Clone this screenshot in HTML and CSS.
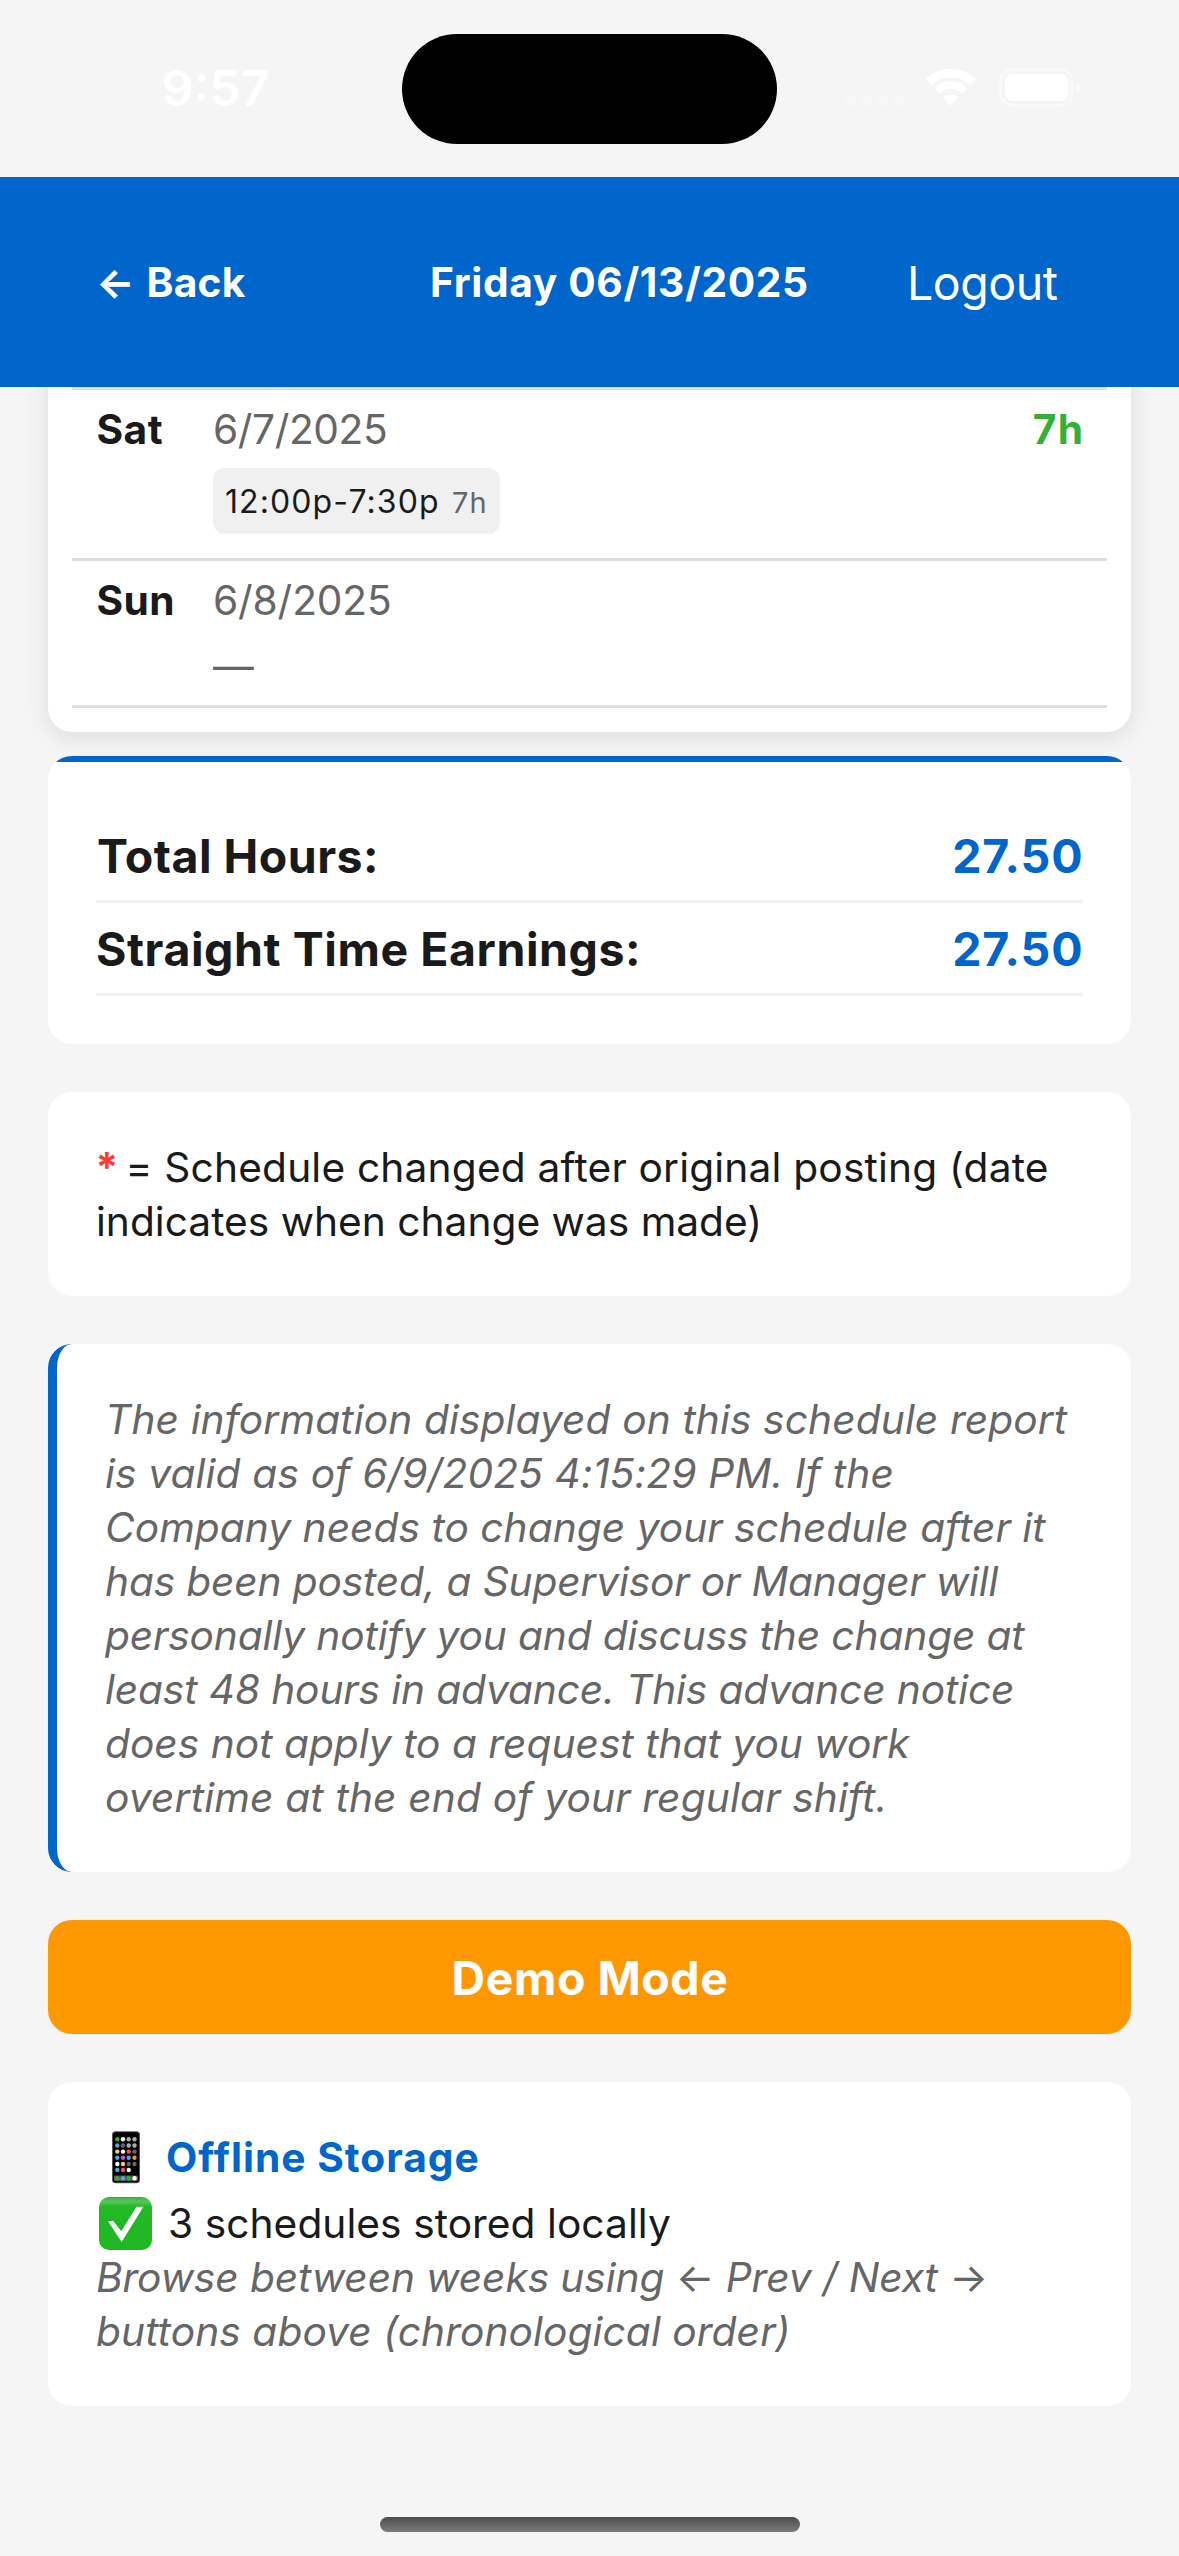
FILE: index.html
```
<!DOCTYPE html>
<html lang="en">
<head>
<meta charset="utf-8">
<title>Schedule</title>
<link rel="stylesheet" href="styles.css">
</head>
<body>
<div class="screen">
  <div class="status-bar">
    <span class="clock">9:57</span>
    <div class="island"></div>
    <svg class="cellular" width="60" height="12" viewBox="0 0 60 12"><circle cx="6" cy="6" r="5"/><circle cx="22" cy="6" r="5"/><circle cx="38" cy="6" r="5"/><circle cx="54" cy="6" r="5"/></svg>
    <svg class="wifi" width="50" height="37" viewBox="0 0 50 37">
      <clipPath id="wedge"><path d="M24.7 36.8L-14.8 -5.9H64.2Z"/></clipPath>
      <g clip-path="url(#wedge)" fill="none" stroke="#fff">
        <circle cx="24.7" cy="36.7" r="32.4" stroke-width="8.4"/>
        <circle cx="24.7" cy="36.7" r="20.6" stroke-width="7.6"/>
        <circle cx="24.7" cy="36.7" r="11" fill="#fff" stroke="none"/>
      </g>
    </svg>
    <svg class="battery" width="82" height="40" viewBox="0 0 82 40">
      <rect x="1.5" y="1.5" width="72" height="36" rx="12" fill="none" stroke="#fff" stroke-opacity=".4" stroke-width="3"/>
      <rect x="6" y="6" width="63" height="27" rx="8" fill="#fff"/>
      <path d="M77.5 14.5c5 2 5 8 0 10z" fill="#fff" fill-opacity=".5"/>
    </svg>
  </div>

  <header class="header">
    <a class="back"><span class="back-arrow">←</span>Back</a>
    <h1 class="title">Friday 06/13/2025</h1>
    <a class="logout">Logout</a>
  </header>

  <main class="content">
    <section class="card days">
      <div class="day">
        <span class="day-name">Sat</span>
        <div class="day-body">
          <span class="date">6/7/2025</span>
          <div class="shift"><span class="shift-time">12:00p-7:30p</span><span class="shift-hours">7h</span></div>
        </div>
        <span class="day-total">7h</span>
      </div>
      <div class="day day-off">
        <span class="day-name">Sun</span>
        <div class="day-body">
          <span class="date date-wide">6/8/2025</span>
          <span class="none">—</span>
        </div>
      </div>
    </section>

    <section class="card totals">
      <div class="total"><span class="total-hours">Total Hours:</span><span class="value">27.50</span></div>
      <div class="total"><span>Straight Time Earnings:</span><span class="value">27.50</span></div>
    </section>

    <section class="card legend">
      <p class="line"><b class="star">*</b><span class="legend-text">= Schedule changed after original posting (date</span></p>
      <p class="line">indicates when change was made)</p>
    </section>

    <section class="card notice">
      <span class="line">The information displayed on this schedule report</span>
      <span class="line">is valid as of 6/9/2025 4:15:29 PM. If the</span>
      <span class="line">Company needs to change your schedule after it</span>
      <span class="line">has been posted, a Supervisor or Manager will</span>
      <span class="line">personally notify you and discuss the change at</span>
      <span class="line">least 48 hours in advance. This advance notice</span>
      <span class="line">does not apply to a request that you work</span>
      <span class="line">overtime at the end of your regular shift.</span>
    </section>

    <button class="demo">Demo Mode</button>

    <section class="card storage">
      <h2 class="storage-title">
        <svg class="emoji" width="70" height="54" viewBox="0 0 70 54">
          <rect x="16" y="1.3" width="28" height="52" rx="3.5" fill="#555"/>
          <rect x="17" y="2.3" width="26" height="50" rx="2.6" fill="#000"/>
          <rect x="18" y="45.5" width="24" height="5.6" rx="1" fill="#555"/>
          <g fill="#fff"><circle cx="27" cy="9.3" r="2.2"/><circle cx="27" cy="21.6" r="2.2"/><circle cx="21.3" cy="34" r="2.2"/><circle cx="32.7" cy="40" r="2.2"/><circle cx="38.5" cy="48.3" r="2.2"/></g>
          <g fill="#aaa"><circle cx="32.7" cy="9.3" r="2.2"/><circle cx="38.5" cy="9.3" r="2.2"/><circle cx="32.7" cy="15.5" r="2.2"/><circle cx="38.5" cy="15.5" r="2.2"/></g>
          <g fill="#666"><circle cx="27" cy="15.5" r="2.2"/><circle cx="38.5" cy="21.6" r="2.2"/><circle cx="32.7" cy="34" r="2.2"/><circle cx="38.5" cy="34" r="2.2"/></g>
          <g fill="#5aa0e6"><circle cx="21.3" cy="15.5" r="2.2"/><circle cx="21.3" cy="27.7" r="2.2"/><circle cx="32.7" cy="27.7" r="2.2"/><circle cx="21.3" cy="40" r="2.2"/><circle cx="27" cy="48.3" r="2.2"/></g>
          <g fill="#22b824"><circle cx="21.3" cy="9.3" r="2.2"/><circle cx="21.3" cy="48.3" r="2.2"/><circle cx="32.7" cy="48.3" r="2.2"/></g>
          <g fill="#ffc57a"><circle cx="21.3" cy="21.6" r="2.2"/><circle cx="27" cy="34" r="2.2"/></g>
          <g fill="#ff4d4d"><circle cx="32.7" cy="21.6" r="2.2"/><circle cx="27" cy="40" r="2.2"/></g>
          <circle cx="27" cy="27.7" r="2.2" fill="#c94fd6"/><circle cx="38.5" cy="27.7" r="2.2" fill="#ff8c1a"/>
        </svg><span>Offline Storage</span>
      </h2>
      <p class="stored">
        <svg class="emoji" width="72" height="54" viewBox="0 0 72 54">
          <defs><linearGradient id="gloss" x1="0" y1="0" x2="0" y2="1"><stop offset="0" stop-color="#3fa840"/><stop offset=".08" stop-color="#58c85a"/><stop offset=".18" stop-color="#24b826"/><stop offset="1" stop-color="#1fb822"/></linearGradient></defs>
          <rect x="3" y="1" width="53" height="53" rx="10" fill="url(#gloss)"/>
          <path d="M12 25.3L17.2 24.8L25.3 35.3L40.5 10.7H47.5L25.6 46Z" fill="#fff"/>
        </svg><span>3 schedules stored locally</span>
      </p>
      <p class="line hint">Browse between weeks using <span class="arrow">←</span> Prev / Next <span class="arrow">→</span></p>
      <p class="line hint hint-end">buttons above (chronological order)</p>
    </section>
  </main>
  <div class="home-indicator"></div>
</div>
</body>
</html>
```
FILE: styles.css
```
* { box-sizing: border-box; }

body {
  margin: 0;
  background: #f5f5f5;
  color: #1a1a1a;
  font: 400 40.7px/54px Inter, "Liberation Sans", sans-serif;
}

h1, h2, p { margin: 0; font-size: inherit; }

.screen {
  width: 1179px;
  height: 2556px;
  display: flex;
  flex-direction: column;
  overflow: hidden;
}

/* Status bar */
.status-bar {
  height: 177px;
  flex: none;
  display: flex;
  align-items: flex-start;
  padding: 34px 0 0 161.4px;
  color: #fff;
}
.clock { width: 240.6px; margin-top: 27px; font-size: 50px; font-weight: 600; }
.island { width: 375px; height: 110px; border-radius: 55px; background: #000; }
.cellular { margin: 61px 0 0 68px; fill: #fff; fill-opacity: .3; }
.wifi { margin: 35px 0 0 21px; }
.battery { margin: 34px 0 0 23px; }

/* Header */
.header {
  height: 210px;
  flex: none;
  display: grid;
  grid-template-columns: 334px 477px auto;
  align-items: center;
  padding: 2px 96px 0;
  background: #0066cc;
  color: #fff;
  font-weight: 700;
}
.back { display: flex; letter-spacing: .24px; }
.back-arrow { width: 50.5px; }
.title { font-weight: 700; letter-spacing: .65px; }
.logout { font-size: 46.5px; font-weight: 400; letter-spacing: -.45px; }

/* Cards: text boxes sit one pixel below the padding's midline */
.content { padding: 0 48px; overflow: clip; }
.card { padding: 49px 48px 47px; border-radius: 24px; background: #fff; }
.line { display: block; white-space: nowrap; }

.days {
  margin-top: -30px;
  padding: 30px 24px 24px;
  box-shadow: 0 6px 24px rgba(0, 0, 0, .1);
}
.day {
  display: flex;
  padding: 13px 24px 24px;
  border-bottom: 3px solid #dedede;
}
.day:first-child { border-top: 3px solid #dedede; }
.day-off { padding-bottom: 12px; }
.day-name { width: 117px; padding-left: .5px; font-weight: 700; letter-spacing: .45px; }
.day-body {
  flex: 1;
  display: flex;
  flex-direction: column;
  align-items: flex-start;
  gap: 11px;
  color: #666;
}
.date { letter-spacing: -.41px; }
.date-wide { letter-spacing: -.15px; }
.none { padding-top: 1px; margin-bottom: -1px; }
.day-total { color: #34b036; font-weight: 700; letter-spacing: 1.3px; margin-right: -1.3px; }
.shift {
  display: flex;
  align-items: baseline;
  height: 66px;
  padding: 13px 12px 11px;
  border-radius: 12px;
  background: #f0f0f0;
  line-height: 42px;
}
.shift-time { width: 227px; color: #1a1a1a; font-size: 32px; letter-spacing: 1.1px; }
.shift-hours { width: 36px; font-size: 29px; letter-spacing: 1px; }

.totals {
  margin-top: 24px;
  padding: 54px 48px 48px;
  background: linear-gradient(#0066cc 6px, #fff 6px);
}
.total {
  height: 93px;
  display: flex;
  justify-content: space-between;
  align-items: center;
  padding-top: 2px;
  border-bottom: 3px solid #f0f0f0;
  font-size: 46.5px;
  font-weight: 700;
  letter-spacing: .55px;
}
.total-hours { padding-left: 1px; letter-spacing: .46px; }
.value { color: #0066cc; letter-spacing: .88px; margin-right: -.4px; }

.legend { margin-top: 48px; }
.star { display: inline-block; width: 29.5px; margin-left: -.5px; color: #ff3b30; font-weight: 700; }
.legend-text { margin-left: .5px; letter-spacing: .175px; }

.notice {
  margin-top: 48px;
  border-left: 9px solid #0066cc;
  color: #666;
  font-style: italic;
}
.notice .line:nth-child(1) { letter-spacing: .1px; }
.notice .line:nth-child(2) { letter-spacing: .153px; }
.notice .line:nth-child(3) { letter-spacing: .02px; }
.notice .line:nth-child(4) { letter-spacing: -.168px; }
.notice .line:nth-child(5) { letter-spacing: -.14px; }
.notice .line:nth-child(6) { letter-spacing: -.133px; }
.notice .line:nth-child(8) { letter-spacing: .15px; }

.demo {
  display: block;
  width: 100%;
  height: 114px;
  margin-top: 48px;
  padding: 1px 0 0 1px;
  border: 0;
  border-radius: 24px;
  background: #ff9800;
  color: #fff;
  font: 700 46.5px/54px Inter, "Liberation Sans", sans-serif;
  letter-spacing: .52px;
}

.storage { margin-top: 48px; }
.storage-title {
  display: flex;
  margin-bottom: 12px;
  color: #0066cc;
  font-weight: 700;
  letter-spacing: .98px;
}
.stored { display: flex; letter-spacing: .05px; }
.emoji { flex: none; margin-top: -1px; }
.hint { color: #666; font-style: italic; letter-spacing: -.1px; }
.hint-end { letter-spacing: .08px; }
.arrow { font-style: normal; }

.home-indicator {
  width: 420px;
  height: 15px;
  margin: auto auto 24px;
  border-radius: 8px;
  background: linear-gradient(#4c4c4c, #7c7c7c);
}
```
